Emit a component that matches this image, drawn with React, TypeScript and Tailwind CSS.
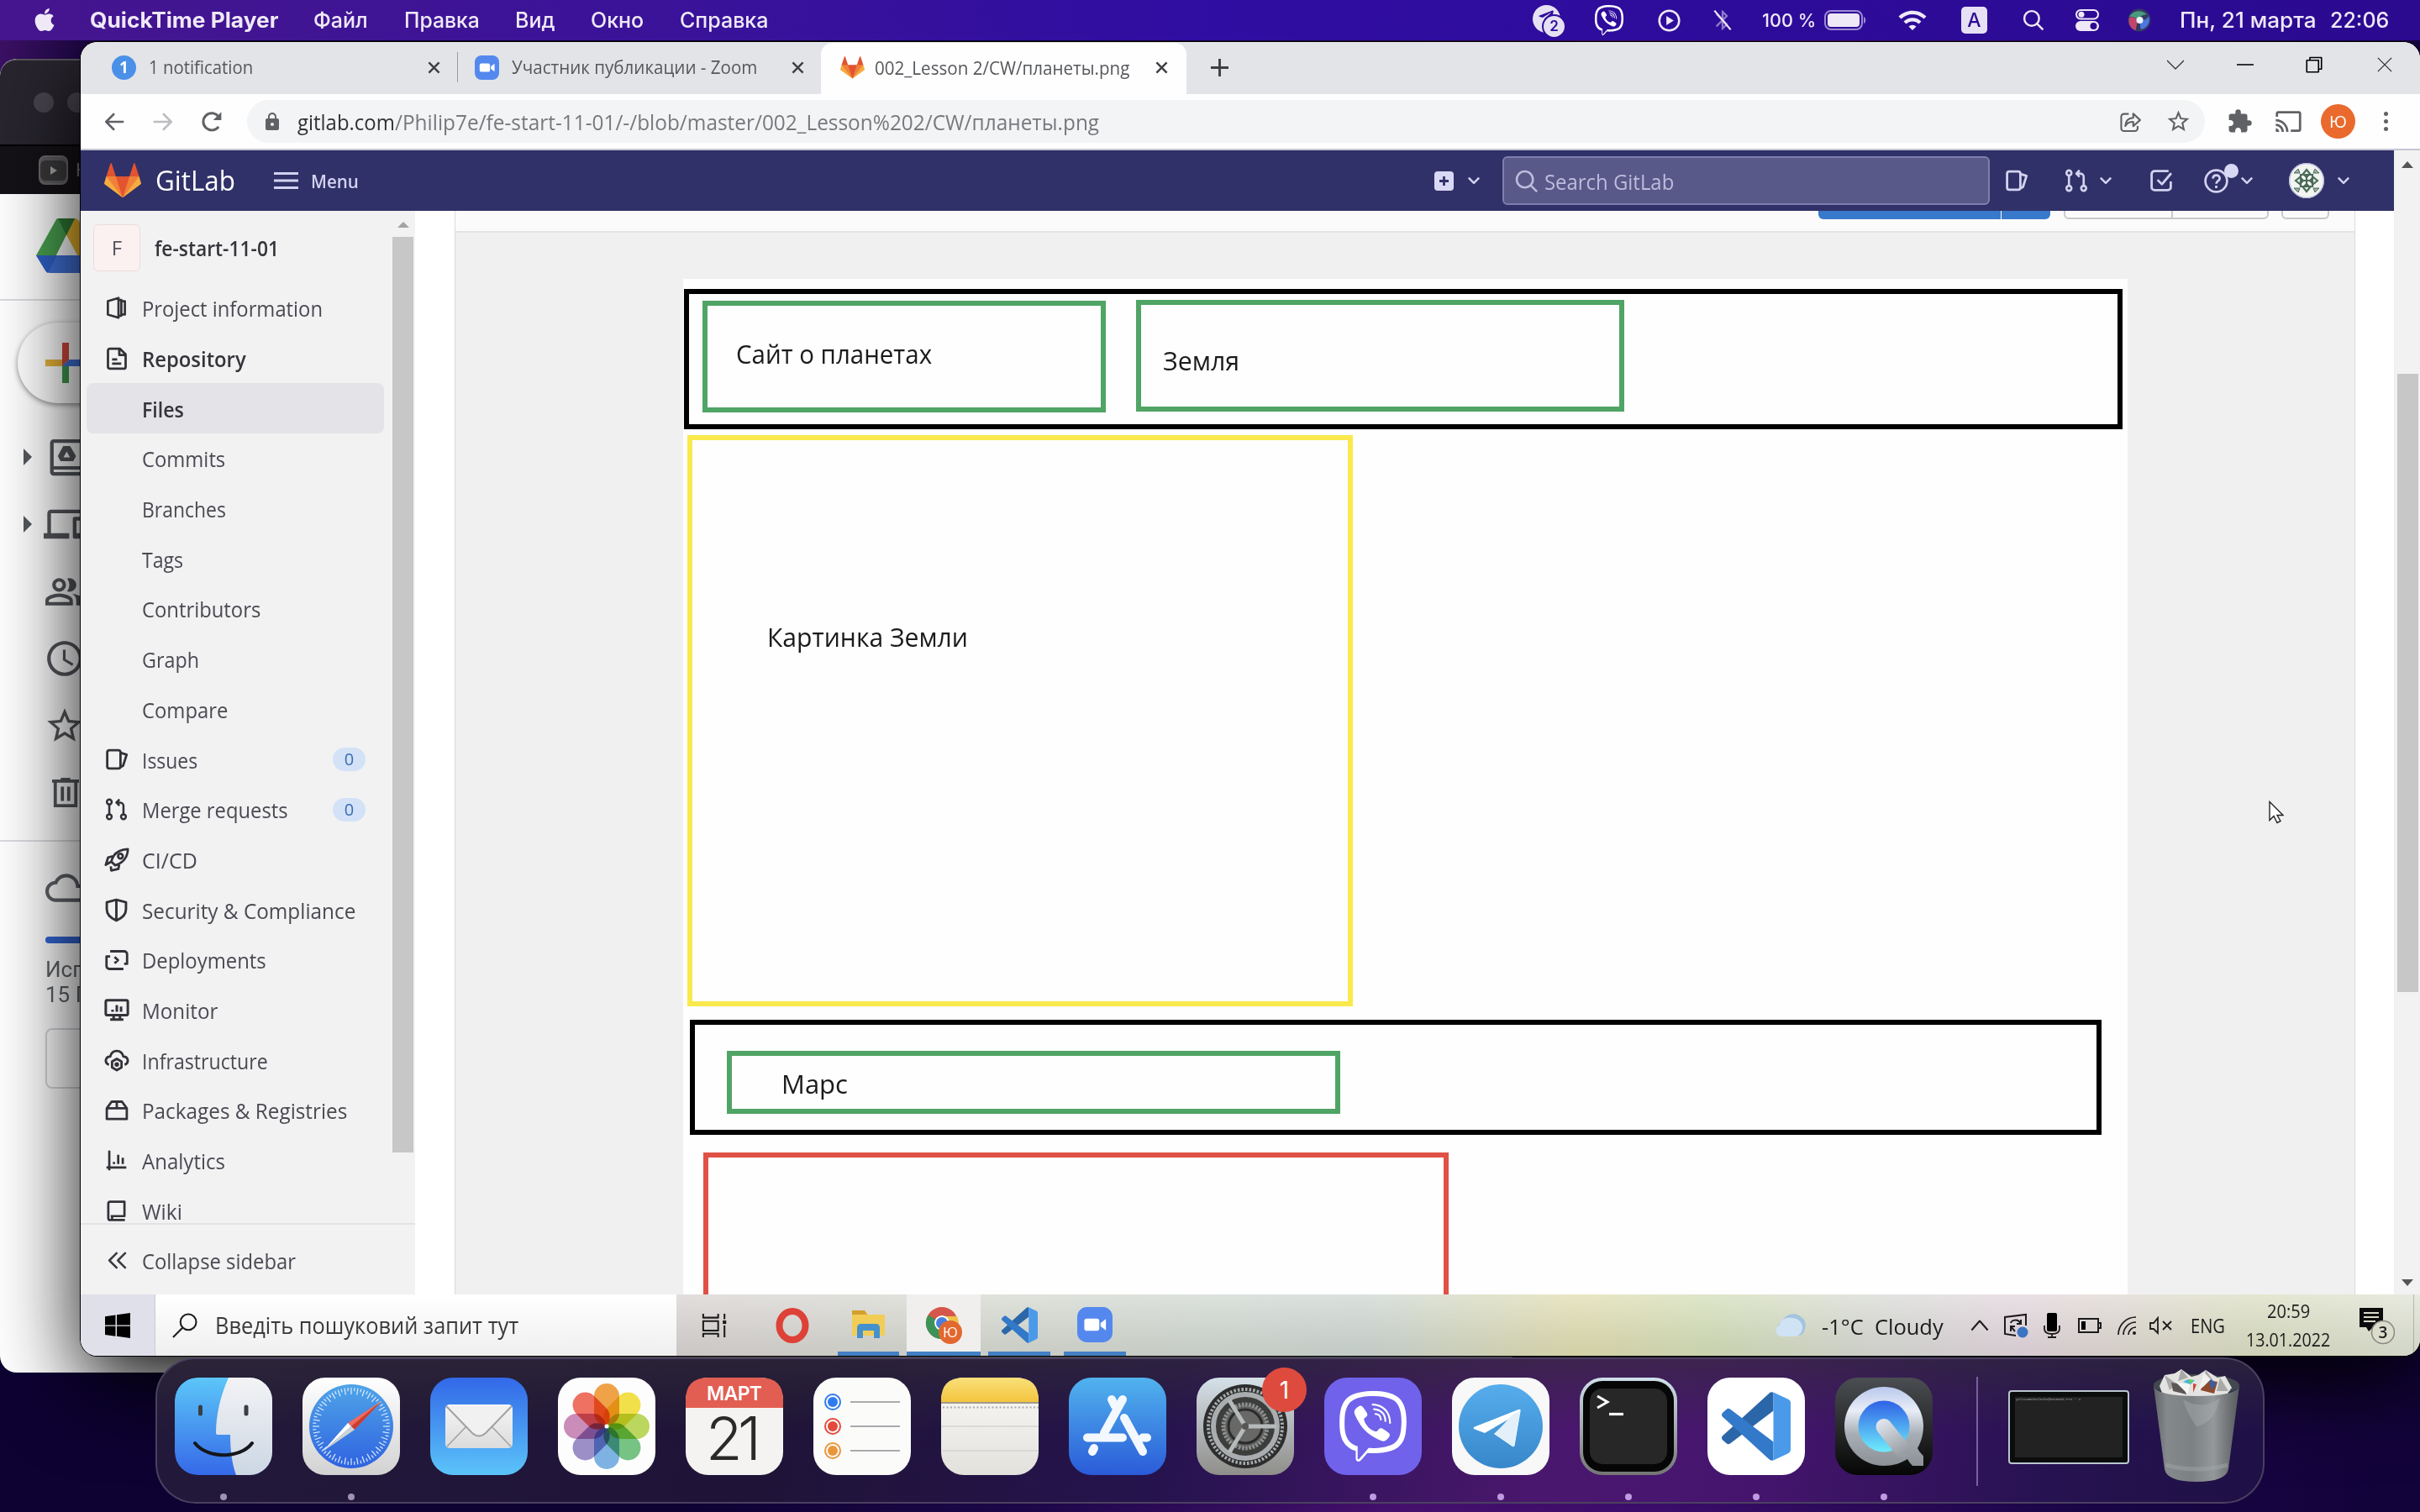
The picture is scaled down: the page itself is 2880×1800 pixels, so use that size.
import React, { useLayoutEffect, useRef, useState } from "react";
import { FaApple, FaViber, FaTelegramPlane } from "react-icons/fa";
import {
  MdAccessTime, MdBluetooth, MdCast, MdCloudQueue, MdDevices,
  MdExtension, MdLock, MdOutlinePeopleAlt, MdStarBorder, MdWifi,
} from "react-icons/md";

/* Single line of text stretched or condensed to an exact width. */
function Fit({ w, className = "", children }: { w: number; className?: string; children: React.ReactNode }) {
  const ref = useRef<HTMLSpanElement>(null);
  const [k, setK] = useState(1);
  useLayoutEffect(() => {
    if (ref.current && ref.current.offsetWidth) setK(w / ref.current.offsetWidth);
  }, [w]);
  return (
    <span className={"block shrink-0 whitespace-pre " + className} style={{ width: w }}>
      <span ref={ref} className="inline-block origin-left" style={{ transform: `scaleX(${k})` }}>
        {children}
      </span>
    </span>
  );
}

type IconProps = { className?: string; children?: React.ReactNode; box?: string; sw?: number };
function Ico({ className = "", children, box = "0 0 16 16", sw = 1.6 }: IconProps) {
  return (
    <svg viewBox={box} className={"block shrink-0 " + className} fill="none" stroke="currentColor" strokeWidth={sw} strokeLinejoin="round">
      {children}
    </svg>
  );
}

const Chevron = ({ className = "" }) => (
  <Ico className={className} sw={2.2}><path d="M2.500 5l5.500 5.500L13.500 5" /></Ico>
);
const Cross = ({ className = "", sw = 2.6 }) => (
  <Ico className={className} sw={sw}><path d="M1.500 1.500l13 13M14.500 1.500l-13 13" /></Ico>
);

const Tanuki = ({ className = "" }) => (
  <svg viewBox="0 1 36 34" className={"block shrink-0 " + className} preserveAspectRatio="none">
    <path fill="#e2532f" d="M2 14l9.380 9v-9l-4-12.280c-.205-.632-1.176-.632-1.380 0z" />
    <path fill="#e2532f" d="M34 14l-9.380 9v-9l4-12.280c.205-.632 1.176-.632 1.380 0z" />
    <path fill="#e2532f" d="M18 34.380 3 14h30z" />
    <path fill="#f0803a" d="M18 34.380 11.380 14H2l4 11zM18 34.380 24.620 14H34l-4 11z" />
    <path fill="#f5ab3f" d="M2 14L.1 20.160c-.18.565 0 1.200.5 1.560l17.420 12.660zM34 14l1.900 6.160c.18.565 0 1.200-.5 1.560L18 34.380z" />
  </svg>
);

const ZoomLogo = ({ className = "" }) => (
  <svg viewBox="0 0 40 40" className={"block shrink-0 " + className}>
    <rect width="40" height="40" rx="11" fill="#5488ee" />
    <rect x="8" y="13" width="17" height="14" rx="3" fill="#fff" />
    <path d="M26.500 18l6-4.500v13l-6-4.500z" fill="#fff" />
  </svg>
);

const VsLogo = ({ className = "" }) => (
  <svg viewBox="0 0 24 24" className={"block shrink-0 " + className}>
    <path fill="#2b66a9" d="M18 .2a1.500 1.500 0 0 0-1.500.3l-9.460 8.630-6.720 6.130a1 1 0 0 0 0 1.480l1.330 1.200a1 1 0 0 0 1.276.057L18 6.550z" />
    <path fill="#3379c9" d="M18 23.800a1.500 1.500 0 0 1-1.500-.3L.33 8.740a1 1 0 0 1 0-1.480l1.320-1.200a1 1 0 0 1 1.276-.058L18 17.450z" />
    <path fill="#4b9aea" d="M18 .15l5.150 2.437A1.500 1.500 0 0 1 24 3.940v16.120a1.500 1.500 0 0 1-.85 1.350L18 23.850z" />
  </svg>
);

/* ---------- macOS menu bar ---------- */
function MenuBar() {
  return (
    <header className="absolute inset-x-0 top-0 flex h-[48px] items-center bg-linear-to-r from-[#45158e] via-[#300da2] to-[#2b0a90] font-['Inter',sans-serif] text-[25px] leading-[46px] font-medium text-[#efe9f7]">
      <FaApple className="ml-[37px] size-[32px] shrink-0 pb-[1px]" />
      <Fit w={224} className="ml-[38px] font-bold">QuickTime Player</Fit>
      <Fit w={65} className="ml-[42px]">Файл</Fit>
      <Fit w={90} className="ml-[43px]">Правка</Fit>
      <Fit w={48} className="ml-[42px]">Вид</Fit>
      <Fit w={63} className="ml-[42px]">Окно</Fit>
      <Fit w={105} className="ml-[43px]">Справка</Fit>
      <div className="ml-auto flex items-center pr-[37px]">
        <div className="relative mt-[3px] mr-[33px] h-[40px] w-[40px]">
          <div className="flex size-[33px] items-center justify-center rounded-full bg-[#e6e0f4]">
            <FaTelegramPlane className="mr-[2px] mb-[4px] size-[20px] text-[#2f0c9c]" />
          </div>
          <div className="absolute right-0 bottom-0 flex size-[29px] items-center justify-center rounded-full border-2 border-[#2f0c9c] bg-[#e6e0f4] text-[17px] font-semibold text-[#2f0c9c]">2</div>
        </div>
        <FaViber className="mr-[40px] size-[36px] text-white" />
        <Ico className="mr-[36px] size-[27px]" sw={1.5}><circle cx="8" cy="8" r="7" /><path d="M6 4.800v6.400L11.200 8z" fill="currentColor" stroke="none" /></Ico>
        <div className="relative mr-[33px]">
          <MdBluetooth className="size-[28px] text-[#8f7ac9]" />
          <Ico className="absolute inset-0 size-[28px]" sw={1.3}><path d="M2.500 1.500l11 13" /></Ico>
        </div>
        <Fit w={64} className="mr-[10px] text-[22px]">100 %</Fit>
        <svg viewBox="0 0 50 24" className="mr-[37px] h-[24px] w-[50px]">
          <rect x="1" y="1" width="44" height="22" rx="7" fill="none" stroke="#9d8ad3" strokeWidth="2" />
          <rect x="4" y="4" width="38" height="16" rx="4" fill="#efe9f7" />
          <path d="M47 8c3 1 3 7 0 8z" fill="#9d8ad3" />
        </svg>
        <MdWifi className="mr-[40px] size-[36px]" />
        <div className="mr-[42px] flex h-[32px] w-[31px] items-center justify-center rounded-[5px] bg-[#e6e0f4] text-[23px] text-[#2b0a90]">A</div>
        <Ico className="mr-[37px] size-[26px]" sw={1.5}><circle cx="6.700" cy="6.700" r="5.400" /><path d="M10.700 10.700l4.300 4.300" /></Ico>
        <svg viewBox="0 0 28 26" className="mr-[34px] h-[26px] w-[28px]">
          <rect x="1" y="1" width="26" height="10.500" rx="5.200" fill="none" stroke="#efe9f7" strokeWidth="2" />
          <circle cx="7" cy="6.200" r="3.500" fill="#efe9f7" />
          <rect y="14" width="28" height="12" rx="6" fill="#efe9f7" />
          <circle cx="21.500" cy="20" r="4" fill="#2b0a90" />
        </svg>
        <svg viewBox="0 0 28 28" className="mr-[34px] size-[28px]">
          <circle cx="14" cy="14" r="13.500" fill="#343a62" />
          <path d="M2 10c5-8 14-9 21-3-7 1-9 3-10 8-3-4-8-6-11-5z" fill="#4a9b7e" />
          <path d="M2 11c-2 7 2 14 8 15 0-5 1-8 3-11-4-4-8-6-11-4z" fill="#c2456e" />
          <path d="M25 9c3 7-2 15-9 16-2-5-1-8 1-11 4 0 7-2 8-5z" fill="#4b78e0" />
          <circle cx="14.500" cy="14" r="4" fill="#eaf5fa" />
        </svg>
        <Fit w={162} className="mr-[17px]">Пн, 21 марта</Fit>
        <Fit w={70}>22:06</Fit>
      </div>
    </header>
  );
}

/* ---------- Google Drive window in the background ---------- */
function DriveWindow() {
  return (
    <div className="absolute top-[70px] left-0 flex h-[1564px] w-[1800px] flex-col overflow-hidden rounded-[20px] bg-white text-[#55585d]">
      <div className="flex h-[104px] items-center gap-[16px] rounded-t-[20px] border-t-2 border-b-2 border-t-[#56525c] border-b-black bg-[#28252e] pl-[40px]">
        <div className="size-[24px] rounded-full bg-[#48454e]" />
        <div className="size-[24px] rounded-full bg-[#48454e]" />
      </div>
      <div className="flex h-[57px] items-center bg-[#151217] pl-[46px]">
        <div className="flex size-[35px] items-center justify-center rounded-[8px] border-2 border-[#6b6a6c] bg-[#5d5c5e]">
          <div className="flex h-[24px] w-[31px] items-center justify-center rounded-[6px] bg-[#3a393b]">
            <svg viewBox="0 0 8 10" className="h-[10px] w-[8px]"><path d="M0 0l8 5-8 5z" fill="#aaa" /></svg>
          </div>
        </div>
        <span className="ml-[9px] font-['Roboto',sans-serif] text-[22px] text-[#77757a]">К</span>
      </div>
      <div className="flex h-[127px] items-center border-b-2 border-[#dadce0] pb-[2px] pl-[43px]">
        <svg viewBox="0 0 72 65" className="h-[65px] w-[72px]">
          <path d="M26 0h20q3 0 5 3l21 41H49L36 20z" fill="#eab52f" />
          <path d="M26 0h20L36 20 24 44H0L23 3q1-3 3-3z" fill="#4aa250" />
          <path d="M36 20L24 44h25z" fill="#fff" />
          <path d="M26 0h20L36 20z" fill="#2f7a36" />
          <path d="M0 44h72L61 62q-1 3-5 3H16q-3 0-5-3z" fill="#4272da" />
          <path d="M0 44h25L14 65q-2-1-3-3z" fill="#2f61c8" />
        </svg>
      </div>
      <div className="mt-[26px] ml-[21px] flex h-[96px] w-[260px] items-center rounded-full bg-white pl-[33px] shadow-[0_2px_6px_rgba(0,0,0,0.45)]">
        <svg viewBox="0 0 48 48" className="size-[48px]">
          <path d="M20 0h8v20l-8 8z" fill="#d5483c" />
          <path d="M0 20h20v8H0z" fill="#e9b53c" />
          <path d="M20 28l8-8v28h-8z" fill="#3f9b50" />
          <path d="M28 20h20v8H20z" fill="#4273dd" />
        </svg>
      </div>
      <div className="mt-[24px] flex flex-col">
        {[0, 1, 2, 3, 4, 5].map((i) => (
          <div key={i} className="flex h-[80px] items-center pl-[28px]">
            {i < 2 ? (
              <svg viewBox="0 0 10 20" className="mr-[14px] h-[20px] w-[10px]"><path d="M0 0l10 10L0 20z" fill="#55585d" /></svg>
            ) : (
              <div className="mr-[14px] w-[10px]" />
            )}
            {i === 0 && (
              <svg viewBox="0 0 48 48" className="size-[52px]">
                <rect x="9" y="6.500" width="34" height="36" rx="2" fill="none" stroke="#55585d" strokeWidth="4" />
                <path d="M9 36h34" stroke="#55585d" strokeWidth="3.600" />
                <path d="M21.500 12h7.500l6.500 11-3 5.500H18.500L15.500 23z M25.300 18l-3.600 6.500h7.200z" fill="#55585d" fillRule="evenodd" />
              </svg>
            )}
            {i === 1 && <MdDevices className="size-[52px]" />}
            {i === 2 && <MdOutlinePeopleAlt className="size-[49px]" />}
            {i === 3 && <MdAccessTime className="size-[50px]" />}
            {i === 4 && <MdStarBorder className="size-[50px]" />}
            {i === 5 && (
              <svg viewBox="0 0 34 38" className="ml-[10px] h-[36px] w-[32px]" fill="none" stroke="#55585d" strokeWidth="4"><path d="M0 4h34M11 2h12M4 4v31h26V4M13 11v18M21 11v18" /></svg>
            )}
          </div>
        ))}
      </div>
      <div className="mt-[16px] border-t-2 border-[#dadce0] pt-[30px] pl-[54px] font-['Roboto',sans-serif] text-[26px] leading-[30px] text-[#5f6368]">
        <MdCloudQueue className="size-[50px]" />
        <div className="mt-[33px] h-[8px] w-[200px] rounded-full bg-[#3367d6]" />
        <div className="mt-[16px]">Исп</div>
        <div>15 Г</div>
        <div className="mt-[25px] h-[72px] w-[200px] rounded-[8px] border-2 border-[#d5d7dc]" />
      </div>
    </div>
  );
}

/* ---------- Chrome tab strip and toolbar ---------- */
function TabStrip() {
  return (
    <div className="flex h-[62px] shrink-0 items-center bg-[#e3e4e8] pb-[2px] pl-[37px] text-[21px] leading-[30px] text-[#55575b]">
      <div className="flex size-[29px] items-center justify-center rounded-full bg-[#4a90e8] text-[19px] font-bold text-white">1</div>
      <Fit w={124} className="ml-[15px]">1 notification</Fit>
      <Cross className="ml-[208px] size-[15px] text-[#3d3f43]" />
      <div className="ml-[20px] h-[36px] w-px bg-[#9a9ca0]" />
      <ZoomLogo className="ml-[20px] size-[29px]" />
      <Fit w={292} className="ml-[15px]">Участник публикации - Zoom</Fit>
      <Cross className="ml-[41px] size-[15px] text-[#3d3f43]" />
      <div className="-mb-[2px] ml-[20px] flex h-[61px] w-[435px] items-center self-end rounded-t-[14px] bg-[#fefefe] pb-[2px] pl-[23px]">
        <Tanuki className="h-[27px] w-[29px]" />
        <Fit w={303} className="ml-[12px]">002_Lesson 2/CW/планеты.png</Fit>
        <Cross className="ml-[31px] size-[15px] text-[#3d3f43]" />
      </div>
      <Ico className="ml-[29px] size-[21px] text-[#3d3f43]" sw={2.2}><path d="M8 0v16M0 8h16" /></Ico>
      <div className="mb-[6px] ml-auto flex items-center pr-[32px] text-[#333]">
        <Ico className="mr-[63px] size-[20px]" sw={1}><path d="M0 4l8 8 8-8" /></Ico>
        <Ico className="mr-[62px] size-[20px]" sw={1.6}><path d="M0 8h16" /></Ico>
        <Ico className="mr-[64px] size-[20px] text-black" sw={1.3}><path d="M1 3.800h11.200V15H1zM4 3.800V1.200h11v11h-2.800" /></Ico>
        <Cross className="size-[20px]" sw={1} />
      </div>
    </div>
  );
}

function Toolbar() {
  return (
    <div className="flex h-[67px] shrink-0 items-center border-b-2 border-[#c4c5d2] bg-[#fefefe] pl-[28px] text-[#5f6165]">
      <Ico className="size-[24px]" sw={1.700}><path d="M15.500 8H1.500M8 1.500L1.500 8 8 14.500" /></Ico>
      <Ico className="ml-[34px] size-[24px] text-[#bcbdc0]" sw={1.700}><path d="M.5 8h14M8 1.500L14.500 8 8 14.500" /></Ico>
      <Ico className="ml-[33px] size-[26px]" sw={1.800}>
        <path d="M13 11.600A6.200 6.200 0 1 1 12.800 4" /><path d="M15 .8v6H9z" fill="currentColor" stroke="none" />
      </Ico>
      <div className="ml-[29px] flex h-[51px] w-[2330px] items-center rounded-full bg-[#f3f4f5] pr-[16px] text-[26px] leading-[36px]">
        <MdLock className="ml-[18px] size-[24px]" />
        <Fit w={116} className="ml-[18px] text-[#303236]">gitlab.com</Fit>
        <Fit w={838} className="text-[#77797d]">/Philip7e/fe-start-11-01/-/blob/master/002_Lesson%202/CW/планеты.png</Fit>
        <Ico className="ml-auto size-[26px]" sw={1.300}>
          <path d="M7 2.200H3.500a2 2 0 0 0-2 2v8.600a2 2 0 0 0 2 2h8a2 2 0 0 0 2-2V11" />
          <path d="M4.500 11c.3-4 2.500-5.800 5.800-5.900V2l5 4.700-5 4.500V8C7.600 8 5.800 8.800 4.500 11z" />
        </Ico>
        <MdStarBorder className="ml-[29px] size-[31px]" />
      </div>
      <MdExtension className="ml-[26px] size-[31px]" />
      <MdCast className="ml-[26px] size-[33px]" />
      <div className="ml-[22px] flex size-[41px] items-center justify-center rounded-full bg-[#ea6a2e] text-[20px] text-white">Ю</div>
      <div className="ml-[34px] flex flex-col gap-[4px]">
        <div className="size-[5px] rounded-full bg-[#5f6165]" />
        <div className="size-[5px] rounded-full bg-[#5f6165]" />
        <div className="size-[5px] rounded-full bg-[#5f6165]" />
      </div>
    </div>
  );
}

/* ---------- GitLab ---------- */
const IssuesIco = ({ className = "" }) => (
  <Ico className={className}><rect x="1.500" y="1.800" width="9" height="12.400" rx="1.500" /><path d="M10.500 3.500l4.200 1.300-2.400 7.500-1.800 1" /></Ico>
);
const MergeIco = ({ className = "" }) => (
  <Ico className={className} sw={1.5}>
    <circle cx="3" cy="2.800" r="1.700" /><circle cx="3" cy="13.200" r="1.700" /><circle cx="13" cy="13.200" r="1.700" />
    <path d="M3 4.500v7M13 11.500V5.500a2.300 2.300 0 0 0-2.300-2.300H7.800M10.200 1L8 3.200l2.200 2.200" />
  </Ico>
);

function GitLabNav() {
  return (
    <div className="flex h-[72px] shrink-0 items-center bg-[#303168] pl-[28px] text-[#d3d2f0]">
      <Tanuki className="h-[42px] w-[44px]" />
      <Fit w={95} className="ml-[17px] text-[33px] leading-[44px] text-white">GitLab</Fit>
      <Ico className="ml-[46px] h-[20px] w-[29px]" box="0 0 29 20" sw={3}><path d="M0 1.500h29M0 10h29M0 18.500h29" /></Ico>
      <Fit w={57} className="ml-[15px] text-[22px] leading-[32px] font-semibold">Menu</Fit>
      <div className="ml-auto flex items-center pr-[51px]">
        <svg viewBox="0 0 23 23" className="mr-[15px] size-[23px]"><rect width="23" height="23" rx="4" fill="#d9d8f5" /><path d="M11.500 6v11M6 11.500h11" stroke="#303168" strokeWidth="2.800" /></svg>
        <Chevron className="mr-[25px] size-[18px]" />
        <div className="mr-[18px] flex h-[58px] w-[580px] items-center rounded-[6px] border-2 border-[#7f7eae] bg-[#585889] pl-[13px] text-[#bdbcdc]">
          <Ico className="size-[27px]" sw={1.5}><circle cx="6.900" cy="6.900" r="5.700" /><path d="M11 11l4.500 4.500" /></Ico>
          <Fit w={154} className="ml-[8px] pt-[1px] text-[25px] leading-[36px]">Search GitLab</Fit>
        </div>
        <IssuesIco className="mr-[43px] size-[28px]" />
        <MergeIco className="mr-[12px] size-[28px]" />
        <Chevron className="mr-[43px] size-[18px]" />
        <Ico className="mr-[37px] size-[28px]"><path d="M14.500 8.500v4a2 2 0 0 1-2 2h-9a2 2 0 0 1-2-2v-9a2 2 0 0 1 2-2h9.500M5.500 7.500L8.500 10.500 14.800 3" /></Ico>
        <div className="relative mr-[13px] size-[29px]">
          <Ico className="size-[29px]" sw={1.500}><circle cx="8" cy="8" r="7.100" /><path d="M5.800 6.400c.2-3 4.600-2.800 4.500 0C10.200 8 8 8 8 9.800M8 11v1.700" /></Ico>
          <div className="absolute -top-[6px] -right-[12px] size-[17px] rounded-full bg-[#d9d8f5]" />
        </div>
        <Chevron className="mr-[41px] size-[18px]" />
        <svg viewBox="0 0 42 42" className="mr-[14px] size-[42px]">
          <circle cx="21" cy="21" r="21" fill="#f2f5f2" />
          <g fill="none" stroke="#4b6b58" strokeWidth="2.200">
            <path d="M21 8l4 5-4 4-4-4zM21 34l4-5-4-4-4 4zM8 21l5-4 4 4-4 4zM34 21l-5-4-4 4 4 4z" />
            <path d="M14 14h14v14H14zM21 13v16M13 21h16" />
            <path d="M6 12l5-5 2 5zM36 12l-5-5-2 5zM6 30l5 5 2-5zM36 30l-5 5-2-5z" fill="#4b6b58" fillOpacity=".5" strokeWidth="1" />
          </g>
          <circle cx="21" cy="21" r="20.300" fill="none" stroke="#b9b8dc" strokeWidth="1.200" />
        </svg>
        <Chevron className="size-[18px]" />
      </div>
    </div>
  );
}

const icons: Record<string, React.ReactNode> = {
  info: <Ico className="size-[27px]"><path d="M2 3.300L9.500 1v14L2 12.700zM9.500 2.500h2v11h-2M11.500 3.300H14v9.400h-2.500" /></Ico>,
  repo: <Ico className="size-[28px]"><path d="M2 2.500a1.300 1.300 0 0 1 1.300-1.300H10L14 5v8.500a1.300 1.300 0 0 1-1.300 1.300H3.300A1.300 1.300 0 0 1 2 13.500zM9.700 1.500V5.500H14M4.800 8.500h3.500M4.800 11.300H11" /></Ico>,
  issues: <IssuesIco className="size-[28px]" />,
  merge: <MergeIco className="size-[27px]" />,
  rocket: <Ico className="size-[30px]" sw={1.500}><path d="M4.500 9.500C5.500 5 9 1.800 15 1.500 15 7 11.500 10.500 7 11.800zM5.500 6L2.500 6.800 1 11.500l3.500-2M9.500 11.300l-.5 2.800-4.500 1-.3-2.600" /><circle cx="10.300" cy="6" r="1.500" /></Ico>,
  shield: <Ico className="size-[29px]"><path d="M8 1.200l6.300 1.600v4.700c0 3.500-2.500 5.800-6.300 7.300-3.800-1.500-6.300-3.800-6.300-7.300V2.800zM8 1.200v13.600" /></Ico>,
  deploy: <Ico className="size-[28px]"><path d="M3.500 2H13a2 2 0 0 1 2 2v6.500h-2M12.500 14H3a2 2 0 0 1-2-2V5.500h2.500M6.500 5.800L8.800 8l-2.300 2.200" /></Ico>,
  monitor: <Ico className="size-[30px]"><rect x="1" y="2" width="14" height="9.500" rx="1" /><path d="M6 11.500v2.500M10 11.500v2.500M3.800 14.300h8.400M5.300 8v1.300M8 5v4.300M10.700 6v3.300" /></Ico>,
  infra: <Ico className="size-[30px]" sw={1.500}><path d="M3 11C-.3 9.500 1 5.500 3.800 5.800 5 1 11 1 12.200 5.800 15 5.500 16.300 9.500 13 11" /><path d="M8 7.200l3 1.700v3.800l-3 1.700-3-1.700V8.900z" /><circle cx="8" cy="10.800" r=".7" /></Ico>,
  pack: <Ico className="size-[28px]"><path d="M1.200 6.500h13.600v7.300H1.200zM1.200 6.500L4.500 2h7l3.300 4.500M8 2v4.500" /></Ico>,
  chart: <Ico className="size-[27px]"><path d="M3 1v14M1 13h14M6.300 9v1.500M9.300 4v6.500M12.500 6v4.500" /></Ico>,
  wiki: <Ico className="size-[27px]"><path d="M14 14.500H3.800A1.500 1.500 0 0 1 2.300 13V2.800a1.300 1.300 0 0 1 1.300-1.300H13.700v10.200H4M5 12v2.500" /></Ico>,
  none: null,
};

const rows: { t: string; w: number; i: string; badge?: boolean; bold?: boolean; active?: boolean }[] = [
  { t: "Project information", w: 215, i: "info" },
  { t: "Repository", w: 124, i: "repo", bold: true },
  { t: "Files", w: 50, i: "none", bold: true, active: true },
  { t: "Commits", w: 99, i: "none" },
  { t: "Branches", w: 100, i: "none" },
  { t: "Tags", w: 49, i: "none" },
  { t: "Contributors", w: 141, i: "none" },
  { t: "Graph", w: 68, i: "none" },
  { t: "Compare", w: 102, i: "none" },
  { t: "Issues", w: 66, i: "issues", badge: true },
  { t: "Merge requests", w: 174, i: "merge", badge: true },
  { t: "CI/CD", w: 66, i: "rocket" },
  { t: "Security & Compliance", w: 254, i: "shield" },
  { t: "Deployments", w: 148, i: "deploy" },
  { t: "Monitor", w: 90, i: "monitor" },
  { t: "Infrastructure", w: 150, i: "infra" },
  { t: "Packages & Registries", w: 244, i: "pack" },
  { t: "Analytics", w: 99, i: "chart" },
  { t: "Wiki", w: 48, i: "wiki" },
];

function Sidebar() {
  return (
    <aside className="flex h-full w-[398px] shrink-0 flex-col bg-[#f2f2f3] text-[25px] leading-[32px] text-[#4b4a52]">
      <div className="flex h-[1205px] overflow-hidden">
        <div className="flex w-[371px] flex-col">
          <div className="mt-[15px] mb-[14px] flex h-[57px] shrink-0 items-center pl-[15px]">
            <div className="flex size-[56px] items-center justify-center rounded-[6px] border border-[#eddcdc] bg-[#fbf1f0] text-[24px] text-[#55525a]">F</div>
            <Fit w={148} className="ml-[17px] font-semibold text-[#35343a]">fe-start-11-01</Fit>
          </div>
          {rows.map((r) => (
            <div key={r.t} className={"ml-[7px] flex h-[59.700px] w-[354px] shrink-0 items-center rounded-[8px] " + (r.active ? "bg-[#e4e3e8] text-[#35343a]" : "")}>
              <div className="mx-[21px] flex w-[29px] justify-center text-[#333238]">{icons[r.i]}</div>
              <Fit w={r.w} className={"-ml-[5px] pt-[1px] " + (r.bold ? "font-semibold text-[#35343a]" : "")}>{r.t}</Fit>
              {r.badge && <div className="mr-[22px] ml-auto flex h-[28px] w-[39px] items-center justify-center rounded-full bg-[#d3e2f7] text-[20px] text-[#3a6db0]">0</div>}
            </div>
          ))}
        </div>
        <div className="flex w-[25px] flex-col items-center">
          <svg viewBox="0 0 14 7" className="mt-[13px] h-[7px] w-[14px]"><path d="M0 7l7-7 7 7z" fill="#a3a3a3" /></svg>
          <div className="mt-[11px] h-[1090px] w-full bg-[#c7c7c7]" />
        </div>
      </div>
      <div className="flex h-[85px] items-center border-t-2 border-[#e2e2e4] pt-[2px]">
        <Ico className="ml-[31px] size-[25px] text-[#3b3a40]"><path d="M8 2L2 8l6 6M14.500 2l-6 6 6 6" /></Ico>
        <Fit w={183} className="ml-[17px]">Collapse sidebar</Fit>
      </div>
    </aside>
  );
}

function PlanetSketch() {
  return (
    <div className="mt-[55px] ml-[271px] flex h-[1300px] w-[1719px] flex-col bg-[#fefefe] text-[31px] leading-[40px] text-[#1c1a1a]">
      <div className="mt-[12px] ml-[1px] flex h-[167px] w-[1712px] shrink-0 border-[6px] border-black pt-px pl-px">
        <div className="mt-[7px] ml-[15px] h-[133px] w-[480px] border-[6px] border-[#50a465]"><Fit w={233} className="mt-[37px] ml-[34px]">Сайт о планетах</Fit></div>
        <div className="mt-[6px] ml-[36px] h-[133px] w-[581px] border-[6px] border-[#50a465]"><Fit w={91} className="mt-[46px] ml-[26px]">Земля</Fit></div>
      </div>
      <div className="mt-[7px] ml-[5px] h-[680px] w-[792px] shrink-0 border-[6px] border-[#fae94c] p-px"><Fit w={239} className="mt-[213px] ml-[88px]">Картинка Земли</Fit></div>
      <div className="mt-[16px] ml-[8px] h-[137px] w-[1680px] shrink-0 border-[6px] border-black pt-[31px]">
        <div className="ml-[38px] h-[75px] w-[730px] border-[6px] border-[#50a465]"><Fit w={79} className="mt-[13px] ml-[59px]">Марс</Fit></div>
      </div>
      <div className="mt-[21px] ml-[24px] h-[300px] w-[887px] shrink-0 border-[6px] border-[#df5145]" />
    </div>
  );
}

function GitLabPage() {
  return (
    <div className="flex h-[1362px] shrink-0 overflow-hidden bg-white">
      <div className="flex w-[2753px] flex-col">
        <GitLabNav />
        <div className="flex h-[1290px]">
          <Sidebar />
          <main className="ml-[47px] flex w-[2262px] flex-col overflow-hidden border-x border-[#dcdcdc] bg-[#f0f0f0]">
            <div className="flex h-[26px] shrink-0 items-start justify-end border-b-2 border-[#e4e4e4] bg-[#fbfbfb] pr-[30px]">
              <div className="h-[10px] w-[217px] rounded-bl-[6px] bg-[#3879cb]" />
              <div className="mr-[16px] ml-px h-[10px] w-[58px] rounded-br-[6px] bg-[#3879cb]" />
              <div className="h-[10px] w-[130px] rounded-bl-[6px] border-2 border-t-0 border-[#c9c9cc]" />
              <div className="mr-[15px] h-[10px] w-[114px] rounded-br-[6px] border-2 border-t-0 border-l-0 border-[#c9c9cc]" />
              <div className="h-[10px] w-[57px] rounded-b-[6px] border-2 border-t-0 border-[#c9c9cc]" />
            </div>
            <PlanetSketch />
          </main>
        </div>
      </div>
      <div className="flex w-[31px] flex-col items-center border-l border-[#eee] bg-[#f2f2f2]">
        <svg viewBox="0 0 14 8" className="mt-[13px] h-[8px] w-[14px]"><path d="M0 8l7-8 7 8z" fill="#555" /></svg>
        <div className="mt-[245px] h-[736px] w-[25px] bg-[#c7c7c7]" />
        <svg viewBox="0 0 14 8" className="mt-[342px] h-[8px] w-[14px]"><path d="M0 0l7 8 7-8z" fill="#555" /></svg>
      </div>
    </div>
  );
}

/* ---------- Windows taskbar ---------- */
const Underline = ({ children, className = "" }: { children: React.ReactNode; className?: string }) => (
  <div className={"flex h-full items-center justify-center border-b-[5px] border-[#4480c4] pt-[4px] " + className}>{children}</div>
);

function Taskbar() {
  return (
    <footer className="flex h-[73px] shrink-0 items-center bg-[linear-gradient(90deg,#d8d3d2_25%,#d6d9d0_38%,#ced7d2_55%,#e0ddb0_64%,#d3deb9_70%,#d9dad6_77%,#e2d6dd_83%,#dbdec2_93%,#dfe3d4_100%)] text-[#1c1c1c]">
      <div className="flex h-full w-full items-center bg-linear-to-b from-white/25 to-black/5">
        <div className="flex h-full w-[88px] items-center justify-center bg-[#dfe0ea]">
          <svg viewBox="0 0 30 30" className="size-[30px]"><path d="M0 4.200l12.500-1.800v12H0zM14 2.200L30 0v14.400H14zM0 15.800h12.500v12L0 26zM14 15.800h16V30l-16-2.200z" /></svg>
        </div>
        <div className="flex h-full w-[621px] items-center border-l border-[#ccc] bg-linear-to-b from-white to-[#efefef] pl-[20px]">
          <Ico className="size-[30px]" sw={1.100}><circle cx="10.200" cy="5.800" r="5" /><path d="M6.600 9.300L.5 15.500" /></Ico>
          <Fit w={361} className="ml-[21px] text-[27px] leading-[36px] text-[#3a3a3a]">Введіть пошуковий запит тут</Fit>
        </div>
        <div className="flex w-[90px] justify-center">
          <Ico className="size-[30px]" sw={1.100}><path d="M1 .5V3h9.500V.5M1 5.200h9.500v6H1zM1 15.500V13.200h9.500v2.300M14.500.5v3.500M14.500 8v7.500" /><path d="M14.500 4.800v2.200" strokeWidth="2.200" /></Ico>
        </div>
        <div className="flex w-[96px] justify-center">
          <svg viewBox="0 0 44 44" className="size-[44px]"><ellipse cx="22" cy="22" rx="15.500" ry="17" fill="none" stroke="#dd4138" strokeWidth="8" /></svg>
        </div>
        <Underline className="ml-[6px] w-[73px]">
          <svg viewBox="0 0 40 36" className="h-[36px] w-[40px]"><path d="M0 2h16l3 4h20v25H0z" fill="#f1cc57" /><path d="M0 1h15l3 5H0z" fill="#d3a02d" /><path d="M6 34V22q0-5 5-5h17q5 0 5 5v12h-7v-9H13v9z" fill="#4591cf" /></svg>
        </Underline>
        <Underline className="ml-[9px] w-[88px] bg-[#f0efee]">
          <svg viewBox="0 0 46 48" className="h-[48px] w-[46px]">
            <circle cx="21" cy="22" r="19" fill="#d5564a" />
            <path d="M21 22L4.500 12.500A19 19 0 0 0 21 41l8-14z" fill="#3b9358" />
            <path d="M21 14h18a19 19 0 0 1-18 27l9-15z" fill="#eec24a" />
            <circle cx="21" cy="22" r="9" fill="#fff" /><circle cx="21" cy="22" r="7" fill="#4a7fe0" />
            <circle cx="31" cy="33" r="14" fill="#e2682f" />
            <text x="31" y="39" textAnchor="middle" fontSize="17" fill="#fff">Ю</text>
          </svg>
        </Underline>
        <Underline className="ml-[9px] w-[74px]"><VsLogo className="size-[43px]" /></Underline>
        <Underline className="ml-[16px] w-[74px]"><ZoomLogo className="size-[42px]" /></Underline>
        <div className="ml-auto flex h-full items-center">
          <svg viewBox="0 0 39 30" className="h-[30px] w-[39px]"><path d="M10 27a9 9 0 0 1-1-17C12 2 23-1 29 3c7 4 9 9 7 16-1 5-4 8-9 8z" fill="#a4c3de" /><path d="M8 28c-7-1-9-9-3-13 2-7 10-11 16-9 8 0 13 7 12 13-1 5-4 8-9 9z" fill="#cfe3f5" /></svg>
          <Fit w={145} className="ml-[17px] pt-[2px] text-[26px] leading-[36px]">-1°C  Cloudy</Fit>
          <Ico className="ml-[32px] size-[22px]" sw={1.500}><path d="M1 12l7-8 7 8" /></Ico>
          <svg viewBox="0 0 30 30" className="ml-[17px] size-[30px]" fill="none" stroke="#1c1c1c" strokeWidth="2"><path d="M27 15V2L2 5v20l13 2" /><path d="M9 12c1-4 9-5 11 0M21 8v5h-5M9 22v-6h5M9 16l5 6" /><circle cx="23" cy="23" r="6.500" fill="#3b74c0" stroke="none" /></svg>
          <svg viewBox="0 0 20 30" className="ml-[18px] h-[30px] w-[20px]"><rect x="4" width="12" height="22" rx="2" /><path d="M1 15v4q0 6 9 6t9-6v-4M10 25v4M5 29h10" fill="none" stroke="#1c1c1c" strokeWidth="1.800" /></svg>
          <svg viewBox="0 0 28 18" className="ml-[21px] h-[18px] w-[28px]"><path d="M1 1h23v16H1zM24 6h3v6h-3" fill="none" stroke="#1c1c1c" strokeWidth="2" /><rect x="4" y="4" width="5" height="10" /></svg>
          <svg viewBox="0 0 24 24" className="ml-[18px] size-[24px]" fill="none" stroke="#1c1c1c" strokeWidth="1.700"><path d="M2 23A21 21 0 0 1 23 2M8 23A15 15 0 0 1 23 8M14 23a9 9 0 0 1 9-9" /><circle cx="21" cy="21" r="2" fill="#1c1c1c" stroke="none" /></svg>
          <svg viewBox="0 0 28 22" className="ml-[15px] h-[22px] w-[28px]" fill="none" stroke="#1c1c1c" strokeWidth="1.800"><path d="M1 8v7h4l5 5V2L5 8zM16 6l10 10M26 6L16 16" /></svg>
          <Fit w={41} className="ml-[21px] text-[24px]">ENG</Fit>
          <div className="ml-[25px] flex w-[100px] flex-col items-center pb-[2px] text-[22px] leading-[34px]">
            <Fit w={51}>20:59</Fit>
            <Fit w={100}>13.01.2022</Fit>
          </div>
          <svg viewBox="0 0 43 46" className="ml-[34px] h-[46px] w-[43px]">
            <path d="M1 2h28v23H17l-5 5-3-5H1z" fill="#0c0c0c" /><path d="M6 8h18M6 13h18M6 18h14" stroke="#d8dbc9" strokeWidth="1.800" />
            <circle cx="29" cy="31" r="13.500" fill="#dcdccd" stroke="#8a8a82" strokeWidth="1.600" />
            <text x="29" y="38" textAnchor="middle" fontSize="19" fontWeight="600" fill="#222">3</text>
          </svg>
          <div className="mr-[7px] ml-[22px] h-full w-px bg-black/20" />
        </div>
      </div>
    </footer>
  );
}

/* ---------- Dock ---------- */
const range = (n: number) => Array.from({ length: n }, (_, i) => i);
const App116 = ({ children }: { children: React.ReactNode }) => (
  <svg viewBox="0 0 116 116" className="block size-[116px] overflow-visible font-['Inter',sans-serif]">{children}</svg>
);
const Sq = ({ fill }: { fill: string }) => <rect width="116" height="116" rx="27" fill={fill} />;
const Grad = ({ id, a, b }: { id: string; a: string; b: string }) => (
  <linearGradient id={id} x1="0" y1="0" x2="0" y2="1"><stop stopColor={a} /><stop offset="1" stopColor={b} /></linearGradient>
);

const dockIcons: { node: React.ReactNode; running?: boolean }[] = [
  { running: true, node: <App116>
    <defs><Grad id="fa" a="#5cc6f8" b="#3569e8" /><Grad id="fb" a="#f3f3f5" b="#ccd7e4" /><clipPath id="fc"><rect width="116" height="116" rx="27" /></clipPath></defs>
    <g clipPath="url(#fc)"><Sq fill="url(#fa)" /><path d="M64 0C54 22 49 45 49 66q0 2 3 2h14c0 18 2 34 7 48h43V0z" fill="url(#fb)" /></g>
    <path d="M30.500 35v8M85 35v8" stroke="#3a3d45" strokeWidth="5" strokeLinecap="round" />
    <path d="M24 78c15 19 54 19 68 0" fill="none" stroke="#15171c" strokeWidth="4" strokeLinecap="round" />
  </App116> },
  { running: true, node: <App116>
    <defs><Grad id="sa" a="#4fa5e8" b="#2f62e0" /><Grad id="sb" a="#ffffff" b="#d2d2d2" /></defs>
    <Sq fill="url(#sb)" /><circle cx="58" cy="58" r="50" fill="url(#sa)" />
    {range(72).map((i) => <path key={i} d={i % 2 ? "M58 12v4" : "M58 12v8"} stroke="#dcebfb" strokeWidth="1.200" transform={`rotate(${i * 5} 58 58)`} />)}
    <path d="M94 28L62 62l-8-8z" fill="#ef6a5e" /><path d="M94 28L62 62l-4-4z" fill="#c93d30" />
    <path d="M24 88l30-34 4 4z" fill="#fff" /><path d="M24 88l34-30 4 4z" fill="#cfd2d6" />
  </App116> },
  { node: <App116>
    <defs><Grad id="ma" a="#3268e8" b="#5bc4f9" /><Grad id="mb" a="#f5f5f5" b="#dcdcdc" /></defs>
    <Sq fill="url(#ma)" /><rect x="18" y="32" width="80" height="52" rx="5" fill="url(#mb)" />
    <path d="M20 82l23-24M96 82L73 58" stroke="#a2a2a2" strokeWidth="1.600" />
    <path d="M19 34l31 32q8 7 16 0l31-32" fill="#f1f1f1" stroke="#a2a2a2" strokeWidth="2" />
  </App116> },
  { node: <App116>
    <Sq fill="#fdfdfd" />
    {["#f09b38", "#f3e03c", "#b9d653", "#6dc07b", "#74aee2", "#9587c6", "#c883b4", "#ef6656"].map((c, i) => (
      <rect key={c} x="43" y="7" width="30" height="50" rx="15" fill={c} fillOpacity=".92" transform={`rotate(${i * 45} 58 58)`} className="mix-blend-multiply" />
    ))}
    <circle cx="58" cy="58" r="2.500" fill="#fff" />
  </App116> },
  { node: <App116>
    <Sq fill="#f4f3f1" /><path d="M0 36V27Q0 0 27 0h62q27 0 27 27v9z" fill="#e25e52" />
    <text x="58" y="27" textAnchor="middle" fontSize="23" fontWeight="600" fill="#fff" textLength="66">МАРТ</text>
    <text x="57" y="98" textAnchor="middle" fontSize="71" fontWeight="300" fill="#2a2a2a" textLength="66">21</text>
  </App116> },
  { node: <App116>
    <Sq fill="#fbfbfa" />
    {["#2f7bf0", "#e44a3c", "#e9963a"].map((c, i) => (
      <g key={c}><circle cx="23" cy={29 + i * 29} r="9" fill="none" stroke={c} strokeWidth="2" /><circle cx="23" cy={29 + i * 29} r="6" fill={c} /><path d={`M44 ${29 + i * 29}h59`} stroke="#aaaaae" strokeWidth="2.200" /></g>
    ))}
  </App116> },
  { node: <App116>
    <defs><Grad id="na" a="#f9e07a" b="#f4c43c" /><Grad id="nb" a="#faf9f7" b="#e2e1dc" /></defs>
    <Sq fill="url(#nb)" /><path d="M0 30v-3Q0 0 27 0h62q27 0 27 27v3z" fill="url(#na)" /><path d="M0 30h116" stroke="#9f9a8d" strokeWidth="2" />
    <path d="M2 35.500h114" stroke="#aaa" strokeWidth="2" strokeDasharray="2 2.500" /><path d="M0 58h116M0 87h116" stroke="#d4d4d2" strokeWidth="1.600" />
  </App116> },
  { node: <App116>
    <defs><Grad id="aa" a="#51b3ee" b="#2a5bd8" /></defs>
    <Sq fill="url(#aa)" /><g stroke="#f3f8fe" strokeWidth="10" strokeLinecap="round"><path d="M64 26L42 66M22 71.500h42M88 71.500h5M30 84l-2 4M51 26l4 8M66 48l22 40" /></g>
  </App116> },
  { node: <div className="relative"><App116>
    <defs><Grad id="ga" a="#d5e0e8" b="#8f8e8a" /></defs>
    <Sq fill="url(#ga)" /><circle cx="58" cy="58" r="50" fill="#2d2d2d" />
    <circle cx="58" cy="58" r="44" fill="none" stroke="#a7abad" strokeWidth="4" strokeDasharray="2.600 2" /><circle cx="58" cy="58" r="38" fill="#3d3d3c" stroke="#a9adaf" strokeWidth="6" />
    <circle cx="58" cy="58" r="26" fill="#5f605e" stroke="#8d9091" strokeWidth="5" strokeDasharray="2.600 1.600" /><circle cx="58" cy="58" r="20" fill="#686966" stroke="#2b2b2b" strokeWidth="3" />
    <path d="M58 58h37M58 58L39 27M58 58L39 89" stroke="#b6babb" strokeWidth="5" /><circle cx="58" cy="58" r="4" fill="#555" />
  </App116><div className="absolute -top-[12px] -right-[15px] flex size-[53px] items-center justify-center rounded-full bg-[#de4b3e] font-['Inter',sans-serif] text-[28px] text-white">1</div></div> },
  { running: true, node: <div className="flex size-[116px] items-center justify-center rounded-[27px] bg-[#7062ea]"><FaViber className="size-[84px] text-white" /></div> },
  { running: true, node: <App116>
    <defs><Grad id="ta" a="#56adec" b="#3787cb" /></defs>
    <Sq fill="#f8f8f8" /><circle cx="58" cy="58" r="50" fill="url(#ta)" />
    <path d="M27 61.500q-3-1.500 0-3L79 38q3-1 2.500 2l-7 41q-.5 2-3 .500L50 67l20-19-31 18z" fill="#fff" /><path d="M51 67l21-23 9-4-7 41q-.5 2-3 .5z" fill="#e3f0fa" />
  </App116> },
  { running: true, node: <App116>
    <defs><Grad id="ea" a="#cfe0ea" b="#757575" /></defs>
    <Sq fill="url(#ea)" /><rect x="4" y="4" width="108" height="108" rx="23" fill="#060606" /><rect x="12" y="13" width="92" height="90" rx="15" fill="#272727" />
    <path d="M21 22l12 7-12 7" fill="none" stroke="#fff" strokeWidth="3" /><path d="M35 43.500h17" stroke="#fff" strokeWidth="3.200" />
  </App116> },
  { running: true, node: <div className="flex size-[116px] items-center justify-center rounded-[27px] bg-white"><VsLogo className="size-[82px]" /></div> },
  { running: true, node: <App116>
    <defs>
      <Grad id="qa" a="#4b4e52" b="#060606" /><Grad id="qc" a="#2f62e6" b="#6fecfb" />
      <linearGradient id="qb" x1="0" y1="0" x2="0" y2="1"><stop stopColor="#b9c8ec" /><stop offset=".3" stopColor="#e9edf7" /><stop offset=".6" stopColor="#a7adb5" /><stop offset="1" stopColor="#8b9196" /></linearGradient>
      <linearGradient id="qd" gradientUnits="userSpaceOnUse" x1="58" y1="50" x2="82" y2="90"><stop stopColor="#dfe4ec" /><stop offset="1" stopColor="#979da3" /></linearGradient>
    </defs>
    <Sq fill="url(#qa)" />
    <path d="M58 11c26 0 47 21 47 47 0 10-3 19-7 26q2 5 7 9v12H92q-4-4-6-8c-8 5-17 8-28 8-26 0-47-21-47-47s21-47 47-47z" fill="url(#qb)" />
    <circle cx="58" cy="58" r="30.500" fill="url(#qc)" />
    <path d="M58 58.500L80 86" stroke="url(#qd)" strokeWidth="19" strokeLinecap="round" />
  </App116> },
];

function Dock() {
  return (
    <div className="absolute top-[1616px] left-[185px] flex h-[174px] w-[2510px] items-start rounded-[48px] border-2 border-[#4b4060] bg-[linear-gradient(180deg,rgba(50,46,52,0.55),rgba(40,30,60,0)_50%),linear-gradient(100deg,#22193a_0%,#1f1438_30%,#26134e_48%,#4a176e_66%,#45156e_76%,#261250_90%,#1e1146_100%)] pt-[22px] pl-[21px]">
      {dockIcons.map((d, i) => (
        <div key={i} className="mr-[36px] flex shrink-0 flex-col items-center">
          {d.node}
          {d.running && <div className={"mt-[22px] size-[8px] rounded-full " + (i < 2 ? "bg-[#a291b6]" : "bg-[#bf9ae0]")} />}
        </div>
      ))}
      <div className="-mt-[1px] ml-[16px] h-[130px] w-[2px] shrink-0 bg-[#7c5e9e]" />
      <div className="mt-[15px] ml-[36px] h-[88px] w-[144px] shrink-0 rounded-[4px] border-2 border-[#b9c6cf] bg-[#0b0d0d] p-[6px]">
        <div className="h-full bg-[#222] pt-[1px] pl-px font-['Liberation_Mono',monospace] text-[4px] leading-[5px] whitespace-nowrap text-[#aaa]">yuliiamoskalenko@MacBook-Pro ~ %</div>
      </div>
      <svg viewBox="0 0 104 134" className="-mt-[10px] ml-[28px] h-[134px] w-[104px] shrink-0">
        <defs><linearGradient id="tr" x1="0" x2="1" y1="0" y2="0"><stop stopColor="#5f6468" /><stop offset=".15" stopColor="#85898c" /><stop offset=".45" stopColor="#7c8184" /><stop offset=".7" stopColor="#94989a" /><stop offset="1" stopColor="#55595d" /></linearGradient></defs>
        <ellipse cx="52" cy="19" rx="51" ry="13" fill="#42484f" />
        <path d="M8 20l6-13 12-2 8-5 12 9 8-2 9-6 14 9 9-2 8 14-10 14H14z" fill="#e3e3e1" />
        <path d="M34 0l8 10-12 4zM14 7l14 10-8 8zM63 1l-4 14 14 0zM80 10l10 16-14 0z" fill="#a9a9a7" />
        <path d="M22 16l14 2 4 12-16-4z" fill="#5c5654" /><path d="M28 16l16 2-2 12z" fill="#f5f5f4" />
        <path d="M36 15l6-3 8 1-5 5z" fill="#42b8d8" /><path d="M42 12l6 1-3 4z" fill="#6fd04a" />
        <path d="M48 17l4 1-4 10z" fill="#d0452f" /><path d="M60 12l17 3-4 14-16-4z" fill="#8d4a2a" /><path d="M66 10l10 7-6 8z" fill="#3d5d9d" /><path d="M61 4l8 8-8 8-7 6z" fill="#f1f1f0" />
        <path d="M1 20q4 12 51 12t51-12l-13 99q-3 15-38 15t-38-15z" fill="url(#tr)" />
        <path d="M36 36q24 14 44-2-6 30-28 34-12-16-16-32z" fill="#b4b6b7" opacity=".35" />
        <path d="M15 114q38 10 74 0" stroke="#a4a8aa" fill="none" opacity=".45" strokeWidth="5" />
      </svg>
    </div>
  );
}

export default function App() {
  return (
    <div className="relative h-[1800px] w-[2880px] overflow-hidden bg-[linear-gradient(100deg,#3f1268_0%,#0e0233_5%,#0d0232_35%,#1c0748_48%,#45106c_62%,#3a0d68_72%,#190545_88%,#12033a_100%)] font-['Open_Sans','Noto_Sans',sans-serif]">
      <DriveWindow />
      <div className="absolute top-[50px] left-[96px] flex h-[1564px] w-[2784px] flex-col overflow-hidden rounded-[20px] bg-white shadow-[0_0_0_1px_#000,0_36px_100px_rgba(0,0,0,0.95)]">
        <TabStrip />
        <Toolbar />
        <GitLabPage />
        <Taskbar />
      </div>
      <MenuBar />
      <Dock />
      <svg viewBox="0 0 18 27" className="absolute top-[953px] left-[2700px] h-[28px] w-[18px]"><path d="M1 1v22l5-5 4 8 4-2-4-7h7z" fill="#fff" stroke="#222" strokeWidth="1.400" /></svg>
    </div>
  );
}
